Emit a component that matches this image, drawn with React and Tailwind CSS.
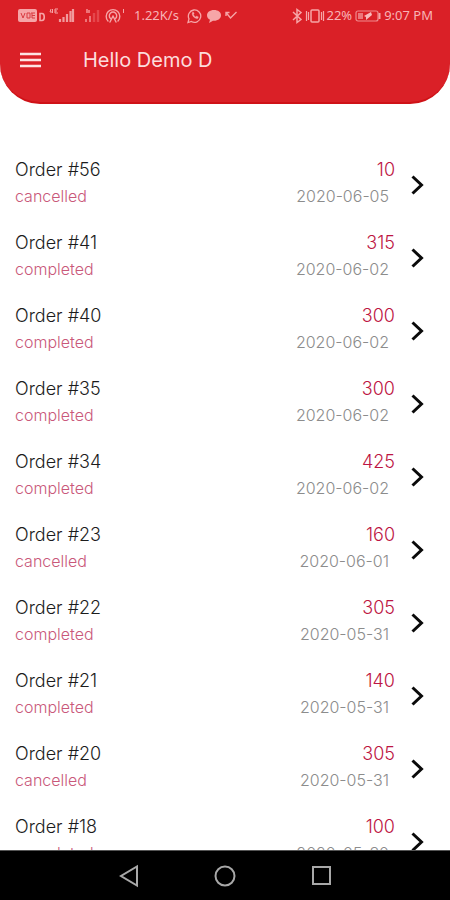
import React from 'react';

const orders = [
  { id: 56, status: 'cancelled', total: 10, date: '2020-06-05' },
  { id: 41, status: 'completed', total: 315, date: '2020-06-02' },
  { id: 40, status: 'completed', total: 300, date: '2020-06-02' },
  { id: 35, status: 'completed', total: 300, date: '2020-06-02' },
  { id: 34, status: 'completed', total: 425, date: '2020-06-02' },
  { id: 23, status: 'cancelled', total: 160, date: '2020-06-01' },
  { id: 22, status: 'completed', total: 305, date: '2020-05-31' },
  { id: 21, status: 'completed', total: 140, date: '2020-05-31' },
  { id: 20, status: 'cancelled', total: 305, date: '2020-05-31' },
  { id: 18, status: 'completed', total: 100, date: '2020-05-30' },
];

function NetworkIcons() {
  return (
    <svg width="108" height="16" viewBox="0 0 108 16" fill="none" aria-hidden="true">
      {/* VoLTE badge */}
      <rect x="0" y="1" width="19" height="13" rx="2" fill="#f6a5a7" />
      <path d="M3 5l2 5 2-5M9 5h3v5H9zM14 5v5M13 5h4M14 7.500h3M14 10h3" stroke="#d93a40" strokeWidth="1" />
      <path d="M22 5.500h2c3 0 3 7 0 7h-2z" stroke="#f6a5a7" strokeWidth="1.600" />
      {/* first sim */}
      <path d="M33 1l-1 3h3M34.500 1v4M37 1v4h3M37 1h3M37 3h2" stroke="#f6a5a7" strokeWidth="1" />
      <path d="M42 14v-3M45.500 14V9M49 14V6M52.500 14V3M55 14V1" stroke="#f19a9d" strokeWidth="2.200" />
      {/* second sim */}
      <path d="M69 1v4M71 2v3M68 14v-3M72 14V8" stroke="#ee7478" strokeWidth="2" />
      <path d="M76 14V5M80 14V2" stroke="#e5474c" strokeWidth="2.400" />
      {/* hotspot */}
      <g stroke="#f6a5a7" strokeWidth="1.400" strokeLinecap="round">
        <path d="M90 13a6.800 6.800 0 1 1 10 0" />
        <path d="M92.500 10.500a3.700 3.700 0 1 1 5 0" />
        <path d="M95 8l-3 6M95 8l3 6" />
      </g>
      <path d="M105.500 1v4" stroke="#f6a5a7" strokeWidth="1" />
    </svg>
  );
}

function MessageIcons() {
  return (
    <svg width="52" height="16" viewBox="0 0 52 16" fill="none" aria-hidden="true">
      <g stroke="#f6a5a7" strokeWidth="1.300">
        <path d="M1 14.500l1-3.600A6.200 6.200 0 1 1 4.400 13.500z" />
        <path d="M5.300 4.500c-1 2.800 2.200 6.300 5.200 6.200l1-1.800-2-1-1 1c-1-.5-1.700-1.300-2-2.300l.7-.8-.8-1.800z" fill="#f6a5a7" strokeWidth=".3" />
      </g>
      <path d="M27 2c-4.200 0-7 2.300-7 5.200 0 2 1.200 3.600 3 4.500L22 15l4-2.300h1c4.200 0 7-2.400 7-5.500S31.200 2 27 2z" fill="#f6a5a7" />
      <path d="M39 8V4.500h3.500M39 4.500l4.500 5.500 6-6" stroke="#f6a5a7" strokeWidth="1.400" />
    </svg>
  );
}

function DeviceIcons() {
  return (
    <svg width="34" height="16" viewBox="0 0 34 16" fill="none" stroke="#f6a5a7" strokeWidth="1.500" aria-hidden="true">
      <path d="M1 4l8 7.500-4 3V1.500l4 3L1 12" />
      <rect x="19" y="2" width="8" height="12" rx="1" />
      <path d="M16.500 4v8M29.500 4v8M14.500 3v10M31.500 3v10" strokeWidth="1.200" />
    </svg>
  );
}

function BatteryIcon() {
  return (
    <svg width="26" height="12" viewBox="0 0 26 12" fill="none" aria-hidden="true">
      <rect x="1" y="1" width="22" height="10" rx="2" stroke="#f08a8d" strokeWidth="1.200" />
      <path d="M3 3h5v6H3z" fill="#ec767a" />
      <path d="M16 2l-7 4 2 1 0 3 6-5z" fill="#f8b9bb" />
      <path d="M24.500 3v6" stroke="#f6a5a7" strokeWidth="2" />
    </svg>
  );
}

function StatusBar() {
  return (
    <div className="flex h-8 items-center justify-between pl-[18px] pr-[17px] font-['Noto_Sans',sans-serif] text-[13px] font-normal text-[#f8b4b6]">
      <div className="flex items-center">
        <NetworkIcons />
        <span className="mx-2">1.22K/s</span>
        <MessageIcons />
      </div>
      <div className="flex items-center">
        <DeviceIcons />
        <span>22%</span>
        <span className="mx-[3px]">
          <BatteryIcon />
        </span>
        <span>9:07 PM</span>
      </div>
    </div>
  );
}

function Header() {
  return (
    <header className="shrink-0 rounded-b-[40px] border-b-2 border-[#cf1217] bg-[#da2027] pb-[14px]">
      <StatusBar />
      <div className="flex h-14 items-center pl-5">
        <button type="button" aria-label="Open menu" className="mr-[42px]">
          <svg width="21" height="16" viewBox="0 0 21 16" fill="none" stroke="#fde3e3" strokeWidth="2.500" aria-hidden="true">
            <path d="M0 2h21M0 8h21M0 14h21" />
          </svg>
        </button>
        <h1 className="text-xl font-normal text-[#fcdcdd]">Hello Demo D</h1>
      </div>
    </header>
  );
}

function OrderRow({ order }) {
  return (
    <li>
      <a href={`#order-${order.id}`} className="flex h-[73px] items-center pl-[15px] pr-[26px]">
        <div className="flex-1">
          <p className="text-[18px] leading-[27px] text-[#1c1c1c]">Order #{order.id}</p>
          <p className="text-[16px] leading-[27px] text-[#c9587a]">{order.status}</p>
        </div>
        <div className="text-right">
          <p className="text-[18px] leading-[27px] text-[#bd1543]">{order.total}</p>
          <p className="pr-[6px] text-[16px] leading-[27px] text-[#8c8c8c]">{order.date}</p>
        </div>
        <svg className="ml-4 mt-1" width="13" height="20" viewBox="0 0 13 20" fill="none" stroke="#0a0a0a" strokeWidth="3" aria-hidden="true">
          <path d="M1.500 1.500L10.500 10L1.500 18.500" />
        </svg>
      </a>
    </li>
  );
}

function NavigationBar() {
  return (
    <nav className="flex h-[50px] shrink-0 items-center justify-center gap-[72px] border-t border-[#555] bg-black">
      <button type="button" aria-label="Back">
        <svg width="24" height="24" viewBox="0 0 24 24" fill="none" stroke="#a8a8a8" strokeWidth="2" aria-hidden="true">
          <path d="M20 2.500v19L4 12z" />
        </svg>
      </button>
      <button type="button" aria-label="Home">
        <svg width="24" height="24" viewBox="0 0 24 24" fill="none" stroke="#a8a8a8" strokeWidth="2" aria-hidden="true">
          <circle cx="12" cy="12" r="9.500" />
        </svg>
      </button>
      <button type="button" aria-label="Recent apps">
        <svg width="24" height="24" viewBox="0 0 24 24" fill="none" stroke="#a8a8a8" strokeWidth="2" aria-hidden="true">
          <rect x="4" y="3" width="17" height="17" />
        </svg>
      </button>
    </nav>
  );
}

export default function App() {
  return (
    <div className="flex h-screen flex-col overflow-hidden bg-white font-['Inter',sans-serif] font-light">
      <Header />
      <main className="min-h-0 flex-1 overflow-hidden pt-[42px]">
        <ul>
          {orders.map((order) => (
            <OrderRow key={order.id} order={order} />
          ))}
        </ul>
      </main>
      <NavigationBar />
    </div>
  );
}
